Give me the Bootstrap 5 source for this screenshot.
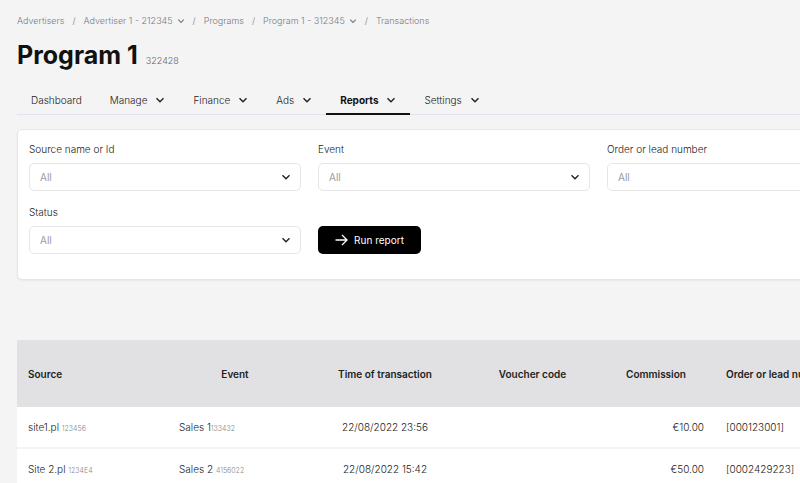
<!DOCTYPE html>
<html lang="en">
<head>
<meta charset="utf-8">
<meta name="viewport" content="width=device-width, initial-scale=1">
<title>Program 1 – Transactions</title>
<link rel="stylesheet" href="https://cdn.jsdelivr.net/npm/bootstrap@5.3.0/dist/css/bootstrap.min.css">
<style>
body{background:#f4f4f4;color:#333;font-family:Inter,"Open Sans",sans-serif;font-size:10px;font-weight:300;line-height:14px;overflow:hidden}
.page{min-width:908px;padding:13px 17px 0}
.chev{width:10px;height:10px;fill:none;stroke:currentColor;stroke-width:1.4;flex:none}
.crumbs{font-size:9px;gap:8px;color:#777a84;--bs-breadcrumb-margin-bottom:0;height:15px}
.crumbs a{color:inherit}
.crumbs .chev{width:8px;height:8px}
.page-head{margin-top:11px}
.title{font-size:25px;line-height:32px;font-weight:700;color:#111}
.title-id{font-size:9px;color:#666}
.tabs{border-bottom:1px solid #e4e4ee;margin-top:15px}
.tabs .nav-link{color:#222;padding:7px 14px;gap:8px;margin-bottom:-1px;border-bottom:2px solid transparent;line-height:14px;height:29px}
.tabs .nav-link.active{color:#111;font-weight:700;border-bottom-color:#111}
.tabs .chev{color:#222}
.filters{margin-top:14px;padding:12px 11px 25px;border:1px solid #e6e6e7;border-radius:5px;box-shadow:0 1px 2px #0000000d}
.filter-grid{display:grid;grid-template-columns:repeat(3,1fr);gap:14px 17px}
.filters label{margin-bottom:7px;color:#222}
.filters .form-select{height:28px;padding:0 30px 0 10px;border-color:#e6e6e7;border-radius:5px;color:#999ba5;font-size:10px;background-size:10px 10px;background-position:right 9px center;background-image:url("data:image/svg+xml,%3Csvg xmlns='http://www.w3.org/2000/svg' viewBox='0 0 10 10'%3E%3Cpath d='M1.5 3.2 5 6.7 8.5 3.2' fill='none' stroke='%23222' stroke-width='1.4'/%3E%3C/svg%3E")}
.run{height:28px;width:103px;border-radius:5px;background:#000;color:#fff;font-size:10px;gap:6px;padding:0}
.run:hover{background:#222;color:#fff}
.report{margin-top:60px;table-layout:fixed;width:100%;--bs-table-bg:#fff}
.report th{height:67px;font-weight:600;color:#222;background:#e1e1e3}
.report th,.report td{padding:0 11px;vertical-align:middle;border:0;white-space:nowrap}
.report td{height:41px;color:#222;background:#fff;border-bottom:2px solid #f4f4f4}
.report .ref{font-size:7px;line-height:1;color:#888}
.c-source{width:151px}.c-event{width:134px}.c-time{width:166px}.c-voucher{width:129px}.c-comm{width:118px}
</style>
</head>
<body>
<div class="page">
<nav aria-label="Breadcrumb">
<ol class="breadcrumb crumbs align-items-center">
<li><a class="text-decoration-none" href="#">Advertisers</a></li><li>/</li>
<li><a class="text-decoration-none d-flex align-items-center gap-1" href="#">Advertiser 1 - 212345 <svg class="chev" viewBox="0 0 10 10"><path d="M1.5 3.2 5 6.7 8.5 3.2"/></svg></a></li><li>/</li>
<li><a class="text-decoration-none" href="#">Programs</a></li><li>/</li>
<li><a class="text-decoration-none d-flex align-items-center gap-1" href="#">Program 1 - 312345 <svg class="chev" viewBox="0 0 10 10"><path d="M1.5 3.2 5 6.7 8.5 3.2"/></svg></a></li><li>/</li>
<li aria-current="page">Transactions</li>
</ol>
</nav>
<header class="page-head d-flex align-items-baseline gap-2">
<h1 class="title mb-0">Program 1</h1><span class="title-id">322428</span>
</header>
<nav class="nav tabs flex-nowrap" aria-label="Program sections">
<a class="nav-link d-flex align-items-center" href="#">Dashboard</a>
<a class="nav-link d-flex align-items-center" href="#">Manage <svg class="chev" viewBox="0 0 10 10"><path d="M1.5 3.2 5 6.7 8.5 3.2"/></svg></a>
<a class="nav-link d-flex align-items-center" href="#">Finance <svg class="chev" viewBox="0 0 10 10"><path d="M1.5 3.2 5 6.7 8.5 3.2"/></svg></a>
<a class="nav-link d-flex align-items-center" href="#">Ads <svg class="chev" viewBox="0 0 10 10"><path d="M1.5 3.2 5 6.7 8.5 3.2"/></svg></a>
<a class="nav-link d-flex align-items-center active" aria-current="page" href="#">Reports <svg class="chev" viewBox="0 0 10 10"><path d="M1.5 3.2 5 6.7 8.5 3.2"/></svg></a>
<a class="nav-link d-flex align-items-center" href="#">Settings <svg class="chev" viewBox="0 0 10 10"><path d="M1.5 3.2 5 6.7 8.5 3.2"/></svg></a>
</nav>
<form class="filters bg-white">
<div class="filter-grid">
<div><label class="d-block" for="source">Source name or Id</label><select class="form-select" id="source"><option>All</option></select></div>
<div><label class="d-block" for="event">Event</label><select class="form-select" id="event"><option>All</option></select></div>
<div><label class="d-block" for="order">Order or lead number</label><select class="form-select" id="order"><option>All</option></select></div>
<div><label class="d-block" for="status">Status</label><select class="form-select" id="status"><option>All</option></select></div>
<div class="d-flex align-items-end"><button type="button" class="btn run d-flex align-items-center justify-content-center"><svg width="13" height="12" viewBox="0 0 13 12" fill="none" stroke="currentColor" stroke-width="1.3"><path d="M.5 6H12M7 1l5 5-5 5"/></svg>Run report</button></div>
</div>
</form>
<table class="table report mb-0">
<colgroup><col class="c-source"><col class="c-event"><col class="c-time"><col class="c-voucher"><col class="c-comm"><col></colgroup>
<thead><tr><th scope="col">Source</th><th scope="col" class="text-center">Event</th><th scope="col" class="text-center">Time of transaction</th><th scope="col" class="text-center">Voucher code</th><th scope="col" class="text-center">Commission</th><th scope="col">Order or lead number</th></tr></thead>
<tbody>
<tr><td>site1.pl <span class="ref">123456</span></td><td>Sales 1<span class="ref">133432</span></td><td class="text-center">22/08/2022 23:56</td><td></td><td class="text-end">€10.00</td><td>[000123001]</td></tr>
<tr><td>Site 2.pl <span class="ref">1234E4</span></td><td>Sales 2 <span class="ref">4156022</span></td><td class="text-center">22/08/2022 15:42</td><td></td><td class="text-end">€50.00</td><td>[0002429223]</td></tr>
</tbody>
</table>
</div>
<script src="https://cdn.jsdelivr.net/npm/bootstrap@5.3.0/dist/js/bootstrap.bundle.min.js"></script>
</body>
</html>
